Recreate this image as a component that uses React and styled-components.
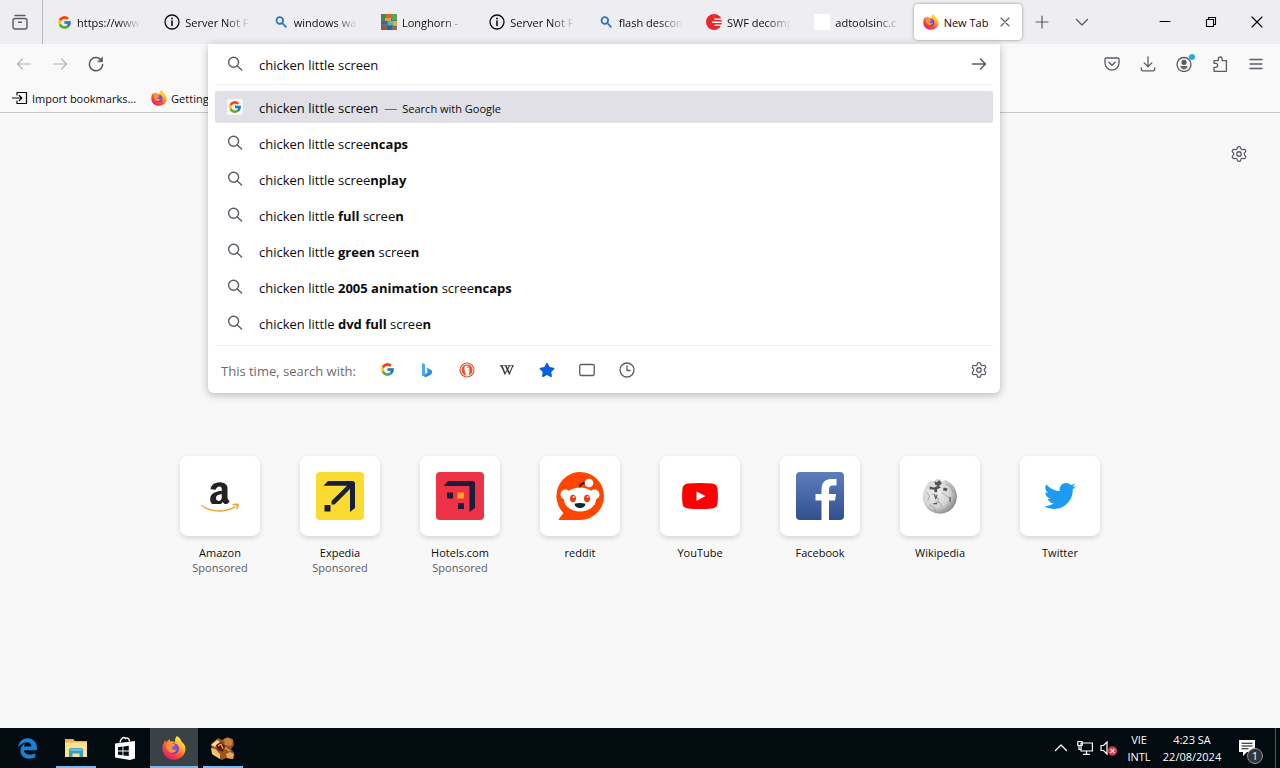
import React from "react";
import styled, { createGlobalStyle, css } from "styled-components";
import { FcGoogle } from "react-icons/fc";
import { FaAmazon, FaTwitter, FaStar, FaWikipediaW, FaEdgeLegacy } from "react-icons/fa";
import { Settings } from "lucide-react";

const GlobalStyle = createGlobalStyle`
  *, *::before, *::after { box-sizing: border-box; }
  body {
    margin: 0;
    background: #f8f8f8;
    color: #0c0c0d;
    font-family: "Open Sans", "Noto Sans", sans-serif;
    font-size: 11px;
  }
  button, input { font: inherit; color: inherit; }
  a { color: inherit; text-decoration: none; }
  svg { display: block; flex: none; }
`;

/* ---------- drawings ---------- */

const Line = styled.svg.attrs({ viewBox: "0 0 16 16", fill: "none" })`
  width: 16px;
  height: 16px;
  stroke: currentColor;
  stroke-width: ${(p) => p.$weight || 1.2};
  stroke-linecap: round;
  stroke-linejoin: round;
`;

const SearchIcon = ({ weight }) => (
  <Line $weight={weight || 1.4}>
    <circle cx="6.6" cy="6.2" r="5" />
    <path d="M10.3 9.900l4.300 4.100" />
  </Line>
);

const InfoIcon = () => (
  <Line $weight={1.3}>
    <circle cx="8" cy="8" r="7" />
    <path d="M8 7v4.500" strokeWidth="1.600" />
    <path d="M8 4.300v.3" strokeWidth="1.800" />
  </Line>
);

const BlueSearchIcon = () => (
  <svg width="16" height="16" viewBox="0 0 16 16" fill="none" stroke="#2a72c4" strokeWidth="1.800">
    <circle cx="6.800" cy="6.500" r="3.300" />
    <path d="M9.300 9l4 4.300" />
  </svg>
);

const MosaicIcon = () => (
  <svg width="16" height="16" viewBox="0 0 16 16">
    <rect width="16" height="16" fill="#4b7f78" />
    <path d="M0 0h5v5H0z" fill="#3f8d3e" />
    <path d="M5 0h6v4H5z" fill="#d8642f" />
    <path d="M11 0h5v6h-5z" fill="#58a552" />
    <path d="M4 4h6v3H4z" fill="#e0a23b" />
    <path d="M0 7h6v3H0z" fill="#2d6fa3" />
    <path d="M7 7h5v4H7z" fill="#62aeb5" />
    <path d="M12 7h4v5h-4z" fill="#e5ac38" />
    <path d="M0 11h5v5H0z" fill="#b8443a" />
    <path d="M6 12h5v4H6z" fill="#355c94" />
    <path d="M12 13h4v3h-4z" fill="#c9552f" />
  </svg>
);

const FlashIcon = () => (
  <svg width="16" height="16" viewBox="0 0 16 16">
    <circle cx="8" cy="8" r="8" fill="#e8292e" />
    <path d="M8 4.400h8v1.500H9zM6 7.600h10v1.400H6zM9 10.600h7v1.400H8z" fill="#f4f0f4" />
  </svg>
);

const FirefoxIcon = ({ size = 16, id }) => (
  <svg width={size} height={size} viewBox="0 0 24 24">
    <defs>
      <linearGradient id={`${id}-flame`} x1="20" y1="2" x2="5" y2="22" gradientUnits="userSpaceOnUse">
        <stop offset="0" stopColor="#fff04a" />
        <stop offset=".3" stopColor="#ffb52e" />
        <stop offset=".6" stopColor="#ff5a35" />
        <stop offset="1" stopColor="#e51a6c" />
      </linearGradient>
      <radialGradient id={`${id}-globe`} cx=".5" cy=".35" r=".7">
        <stop offset="0" stopColor="#9059ff" />
        <stop offset="1" stopColor="#5b3bb5" />
      </radialGradient>
    </defs>
    <path
      fill={`url(#${id}-flame)`}
      d="M14.800 0c3 1.600 4.400 4 4.700 5.700 2.800 1.800 4 4.400 4 7.100C23.500 19 18.400 23.700 12 23.700S.5 18.800.5 12.600c0-3.700 1.200-6.300 3-8.300.1 1.100.4 1.700.8 2.100C5.200 4.900 6.700 3.700 8.300 3.300 7.900 4.200 7.800 4.800 8 5.300c1.600-.2 3.700.1 5.100 1.200C12.700 4 13.100 1.700 14.800 0z"
    />
    <circle cx="11.600" cy="12.600" r="5.300" fill={`url(#${id}-globe)`} />
    <path
      fill="#ff9438"
      d="M4.300 7.600c2.200-1.300 4.400-1 6 .1l2.800.7c-.3 1.500-2.300 1.800-3.200 2.600-.5 2.400 2.200 3.800 5 2.200-1 3.700-5.500 4.700-8.400 2C4.600 13.300 4 10.500 4.300 7.600z"
    />
  </svg>
);

const RecentTabsIcon = () => (
  <Line $weight={1.4}>
    <path d="M3 1.500h10" />
    <rect x="1" y="4.500" width="14" height="10.500" rx="2" />
    <path d="M6.500 8.300h3" />
  </Line>
);

const BackIcon = () => (
  <Line>
    <path d="M14.500 8h-13M6.500 3l-5 5 5 5" />
  </Line>
);
const ForwardIcon = ({ weight }) => (
  <Line $weight={weight}>
    <path d="M1.500 8h13M9.500 3l5 5-5 5" />
  </Line>
);
const ReloadIcon = () => (
  <Line $weight={1.5}>
    <path d="M13.800 5A6.600 6.600 0 1 0 14.600 8.500" />
    <path d="M14.500 1.200v4.600H9.900z" fill="currentColor" strokeWidth=".6" />
  </Line>
);
const ImportIcon = () => (
  <Line>
    <path d="M5 5V2.500h9.500v11H5V11" />
    <path d="M.5 8h9M7.300 5.500L9.800 8l-2.500 2.500" />
  </Line>
);
const PocketIcon = () => (
  <Line $weight={1.3}>
    <path d="M2.200 2h11.600a1.200 1.200 0 0 1 1.200 1.200v3.900a7 7 0 0 1-14 0V3.200A1.200 1.200 0 0 1 2.200 2z" />
    <path d="M4.800 6.200L8 9.200l3.200-3" />
  </Line>
);
const DownloadIcon = () => (
  <Line $weight={1.3}>
    <path d="M8 .8v9.700M4.200 6.900L8 10.700l3.800-3.800" />
    <path d="M1.200 12v1a1.800 1.800 0 0 0 1.800 1.800h10a1.800 1.800 0 0 0 1.800-1.800v-1" />
  </Line>
);
const AccountIcon = () => (
  <Line $weight={1.3}>
    <circle cx="8" cy="8.500" r="7" />
    <circle cx="8" cy="6.300" r="2" fill="currentColor" />
    <path d="M4.800 10.300h6.400c0 1.700-1.400 2.800-3.200 2.800s-3.200-1.100-3.200-2.800z" fill="currentColor" strokeWidth=".5" />
  </Line>
);
const PuzzleIcon = () => (
  <Line $weight={1.3}>
    <path d="M2 7.300V4.600h4.300V2.900a1.900 1.900 0 0 1 3.800 0v1.700h4.300v10.700H2v-3.900h1.600a2 2 0 0 0 0-4.100z" />
  </Line>
);
const MenuIcon = () => (
  <Line $weight={1.3}>
    <path d="M2 3.500h12M2 8h12M2 12.500h12" />
  </Line>
);
const PlusIcon = () => (
  <Line>
    <path d="M8 2v12M2 8h12" />
  </Line>
);
const ChevronIcon = ({ up }) => (
  <Line $weight={1.3}>
    <path d={up ? "M2.500 10.500L8 5l5.500 5.500" : "M2.500 5.500L8 11l5.500-5.500"} />
  </Line>
);
const CrossIcon = ({ small }) => (
  <Line $weight={1.1}>
    <path d={small ? "M4 4l8 8M12 4l-8 8" : "M3 3l10 10M13 3L3 13"} />
  </Line>
);
const MinimizeIcon = () => (
  <Line $weight={1.1}>
    <path d="M3 7.500h10" />
  </Line>
);
const RestoreIcon = () => (
  <Line $weight={1.1}>
    <path d="M3.500 5.500h7v7h-7zM5.500 5.300V3.500h7v7h-2" />
  </Line>
);

const BingIcon = () => (
  <svg width="16" height="16" viewBox="0 0 16 16">
    <defs>
      <linearGradient id="bing-tail" x1="0" y1="0" x2="1" y2="1">
        <stop offset="0" stopColor="#3bd0f5" />
        <stop offset="1" stopColor="#2565dc" />
      </linearGradient>
    </defs>
    <path d="M3 1l3 1.200v10L3 14z" fill="#4aa8f5" />
    <path d="M7.300 5.500l4 1.800c2.300 1.100 2.300 4.200.3 5.400L6.800 15.300 3 13.500l5.800-2.900z" fill="url(#bing-tail)" />
  </svg>
);
const DuckIcon = () => (
  <svg width="16" height="16" viewBox="0 0 16 16">
    <circle cx="8" cy="8" r="7.600" fill="#de5833" />
    <circle cx="8" cy="8" r="6" fill="none" stroke="#fff" strokeWidth=".9" />
    <path d="M5.400 5.200c.8-2 3.700-1.900 4.600.1.500 1.200.3 2 .3 3 .3 2-.2 3.500-.6 5l-2.500.3C6.800 11 5 8 5.400 5.200z" fill="#fff" />
    <path d="M8.400 7.600l3 .3-2.700 1z" fill="#f8bf2e" />
    <circle cx="8.900" cy="5.600" r=".6" fill="#2c4f8f" />
  </svg>
);
const TabsIcon = () => (
  <Line $weight={1.3}>
    <rect x=".8" y="2.500" width="14.400" height="11" rx="1.300" />
  </Line>
);
const ClockIcon = () => (
  <Line $weight={1.3}>
    <circle cx="8" cy="8" r="7" />
    <path d="M8 3.800V8.500h3.200" />
  </Line>
);

const AmazonLogo = () => (
  <svg width="40" height="32" viewBox="0 0 40 32">
    <defs>
      <linearGradient id="amazon-letter" x1="0" y1="0" x2="0" y2="512" gradientUnits="userSpaceOnUse">
        <stop offset=".7" stopColor="#222" />
        <stop offset=".7" stopColor="#222" stopOpacity="0" />
      </linearGradient>
    </defs>
    <FaAmazon x="2" y="0" size={35} fill="url(#amazon-letter)" />
    <path d="M1 24.500c10 7 23 8 34 1.600l.8 1.200C24.500 34 9.500 33 .6 25.300z" fill="#f0a030" />
    <path d="M32 25c2.400-1.600 5.200-1.700 6.600-1 .5 1.800-.6 4.600-2.400 6.400l.5-4.800z" fill="#f0a030" />
  </svg>
);
const ExpediaLogo = () => (
  <svg width="48" height="48" viewBox="0 0 48 48">
    <rect width="48" height="48" rx="4" fill="#fbdb30" />
    <path d="M12 9h24.500q2.500 0 2.500 2.500V36l-5 4V17L18.500 32.500h-3V29L31 13.800H7.500z" fill="#191e3b" />
    <path d="M8.500 33h6v6.500h-6z" fill="#191e3b" />
  </svg>
);
const HotelsLogo = () => (
  <svg width="48" height="48" viewBox="0 0 48 48">
    <rect width="48" height="48" rx="4" fill="#ef3346" />
    <path d="M12 9h24.500q2.500 0 2.500 2.500V36l-5.500 4V14H7.500z" fill="#191e3b" />
    <path d="M11 20.500h6v6h-6zM22 31h6v6h-6z" fill="#191e3b" />
    <path d="M21.500 20.500H28v6h-6.500z" fill="#ffa51f" />
  </svg>
);
const RedditLogo = () => (
  <svg width="48" height="48" viewBox="0 0 48 48">
    <path d="M24 0a24 24 0 1 1 0 48H4q-2 0-.8-1.600L7.500 41A24 24 0 0 1 24 0z" fill="#ff4500" />
    <path d="M23.500 16c.5-3.500 2.500-5 6-5" fill="none" stroke="#4a1509" strokeWidth="1.800" />
    <circle cx="33" cy="11" r="4.300" fill="#fff" />
    <circle cx="9.500" cy="22.500" r="5" fill="#fff" />
    <circle cx="38.500" cy="22.500" r="5" fill="#fff" />
    <ellipse cx="24" cy="27.500" rx="16" ry="12" fill="#fff" />
    <ellipse cx="17" cy="26.500" rx="3" ry="3.800" fill="#e83e13" />
    <ellipse cx="31" cy="26.500" rx="3" ry="3.800" fill="#e83e13" />
    <circle cx="17.600" cy="25" r=".9" fill="#fff" />
    <circle cx="31.600" cy="25" r=".9" fill="#fff" />
    <path d="M18.500 31.700q5.500-1.500 11 0c-.5 5.800-10.500 5.800-11 0z" fill="#10283a" />
  </svg>
);
const YoutubeLogo = () => (
  <svg width="36" height="26" viewBox="0 0 36 26">
    <path d="M6 .6Q18-.5 30 .6q5 .4 5.500 5 .8 7.400 0 14.800-.5 4.600-5.500 5-12 1.100-24 0-5-.4-5.500-5-.8-7.400 0-14.800Q1 1 6 .6z" fill="#f00" />
    <path d="M14.500 8.500v9.500L23.500 13z" fill="#fff" />
  </svg>
);
const FacebookLogo = () => (
  <svg width="48" height="48" viewBox="0 0 48 48">
    <defs>
      <linearGradient id="facebook-blue" x1="0" y1="0" x2="0" y2="1">
        <stop offset="0" stopColor="#5e7dbd" />
        <stop offset="1" stopColor="#32508e" />
      </linearGradient>
    </defs>
    <rect width="48" height="48" rx="4" fill="url(#facebook-blue)" />
    <path d="M25.500 48V28.500H19.500v-6.500h6v-4.500C25.500 10.500 29.500 7 35 7h5.500v6.500H37c-3 0-4 1.500-4 4.200V22h7l-1 6.500h-6V48z" fill="#fff" />
  </svg>
);

const WikipediaLogo = () => (
  <svg width="38" height="36" viewBox="0 0 38 38">
    <defs>
      <radialGradient id="wiki-globe" cx=".38" cy=".4" r=".7">
        <stop offset="0" stopColor="#f4f4f4" />
        <stop offset=".6" stopColor="#d2d2d2" />
        <stop offset="1" stopColor="#777" />
      </radialGradient>
    </defs>
    <path d="M6 5.500l4-2.500 3 1 2-3 5 .5 1 2.500 4-2 5 3.500A18 18 0 1 1 3 11z" fill="url(#wiki-globe)" />
    <path d="M13 3.500l3 1 2-2.500 3 3.500-3 3-4-1zM8 9l5 1 4-2 3 2-4 2v3h-3v-2.500L8 12zM23 10l4 1-1 3-4-1z" fill="#555" />
    <path
      d="M10 17h4v4h3v4l-4 3M21 16c4 0 4 5 8 4M30 20v7l-4 3v5M5 15l3 4-2 5M14 25l5 1 2 5M25 6l5 3 3 7M8 28l5 3 2 5"
      fill="none"
      stroke="#a3a3a3"
      strokeWidth="1"
    />
    <path d="M13 17.500l1.500 4 1.500-4M29.500 20v5M12 27h4" fill="none" stroke="#555" strokeWidth="1.200" />
  </svg>
);

const ExplorerIcon = () => (
  <svg width="24" height="24" viewBox="0 0 24 24">
    <path d="M1 3h8l2 2h12v16H1z" fill="#e8b64c" />
    <path d="M1 6.500h22V21H1z" fill="#fbe38e" />
    <path d="M5 21v-7q0-2 2-2h10q2 0 2 2v7h-3.500v-3.500h-7V21z" fill="#3b9bc1" />
    <path d="M6 12.800h12l-1 2H7z" fill="#74c5df" />
  </svg>
);
const StoreIcon = () => (
  <svg width="24" height="24" viewBox="0 0 24 24">
    <path d="M7 6.500C7.500 2 11 .5 12.500 2.500c2-1.300 4 .5 4 3" fill="none" stroke="#fff" strokeWidth="1.400" />
    <path d="M2 7.500L22 5v17.500L17 24 2 21.500z" fill="#fff" />
    <path d="M5 11.200l4.500-.6v3.900H5zM10.400 10.500l5.400-.7v4.700h-5.400zM5 15.400h4.500v3.900L5 18.700zM10.400 15.400h5.400v4.700l-5.400-.7z" fill="#041014" />
  </svg>
);
const ArchiveIcon = () => (
  <svg width="26" height="24" viewBox="0 0 26 24">
    <path d="M1 8l7-6 4 2 5-3 6 2 1 6-3 4 3 4-1 6-7-1-4 2-9-5z" fill="#9b5524" />
    <path d="M1 9l6-5 3 2-5 5z" fill="#f7d98b" />
    <path d="M14 3l5-1 4 3-2 5-6-1z" fill="#c98148" />
    <path d="M1 12l4 1 5 5v5l-8-5z" fill="#f0c878" />
    <path d="M6 9l5-3 4 4-2 6-5-2z" fill="#5e1711" />
    <path d="M16 18l4-2 4 2-1 5-6-1z" fill="#e0aa57" />
    <path d="M8 10l3-2 2 5M3 14l6 5M15 12l5 3" stroke="#eeb25d" fill="none" strokeWidth="1.100" />
  </svg>
);
const MonitorIcon = () => (
  <Line $weight={1.2}>
    <path d="M4 3h11.400v8H4zM6.500 14.300h6M9.500 11v3" />
    <path d="M.8 1.500h4.400v4H.8zM2 5.500v4h2" />
  </Line>
);
const MutedIcon = () => (
  <svg width="18" height="16" viewBox="0 0 18 16">
    <path d="M1 5.500h2.500L7 2v12l-3.500-3.500H1z" fill="none" stroke="#fff" strokeWidth="1.200" />
    <circle cx="12.500" cy="11" r="4.700" fill="#da3b40" />
    <path d="M10.600 9.100l3.800 3.800M14.400 9.100l-3.800 3.800" stroke="#fff" strokeWidth="1.300" />
  </svg>
);
const MessageIcon = () => (
  <svg width="26" height="18" viewBox="0 0 26 18">
    <path d="M1 1h16v12H9l-4 4v-4H1z" fill="#fff" />
    <path d="M3.500 4.200h11M3.500 7h11M3.500 9.800h7" stroke="#041014" strokeWidth="1.100" />
  </svg>
);

/* ---------- window frame ---------- */

const Desktop = styled.div`
  display: flex;
  flex-direction: column;
  min-height: 100vh;
`;

const IconButton = styled.button`
  display: flex;
  align-items: center;
  justify-content: center;
  flex: none;
  width: ${(p) => p.$width || 36}px;
  height: ${(p) => p.$height || 32}px;
  padding: 0;
  border: 0;
  border-radius: 4px;
  background: none;
  color: ${(p) => (p.$faded ? "#b4b4b9" : "#5b5b66")};
  position: relative;
`;

const TitleBar = styled.header`
  display: flex;
  align-items: center;
  height: 44px;
  background: #eeeef2;
`;

const RecentTabs = styled.div`
  display: flex;
  align-items: center;
  align-self: stretch;
  padding: 0 4px 0 2px;
  margin-right: 4px;
  border-right: 1px solid #b6b6bc;
`;

const TabStrip = styled.div`
  display: flex;
  flex: 1;
  min-width: 0;
`;

const Tab = styled.div`
  display: flex;
  align-items: center;
  flex: 1 1 60px;
  min-width: 0;
  height: 36px;
  padding-right: ${(p) => (p.$active ? 8 : 10)}px;
  border-radius: 4px;
  ${(p) =>
    p.$active &&
    css`
      background: #fff;
      box-shadow: 0 0 3px rgba(0, 0, 0, 0.45);
    `}
`;

const TabButton = styled.button`
  display: flex;
  align-items: center;
  gap: 5px;
  flex: 1;
  min-width: 0;
  height: 100%;
  padding: 0 0 0 9px;
  border: 0;
  background: none;
`;

const TabIcon = styled.span`
  display: flex;
  align-items: center;
  justify-content: center;
  flex: none;
  width: 16px;
  height: 16px;
  background: ${(p) => (p.$blank ? "#fff" : "none")};
`;

const TabLabel = styled.span`
  flex: 1;
  overflow: hidden;
  padding-top: 2px;
  white-space: nowrap;
  text-align: left;
  line-height: 16px;
  ${(p) =>
    p.$fade &&
    css`
      mask-image: linear-gradient(to left, transparent 4px, #000 28px);
    `}
`;

const TabTools = styled.div`
  display: flex;
  margin-right: 40px;
`;

const WindowControls = styled.div`
  display: flex;
  button { color: #000; }
`;

/* ---------- toolbars ---------- */

const Toolbars = styled.div`
  position: relative;
  z-index: 1;
  border-bottom: 1px solid #c8c8cc;
  background: #f9f9fa;
`;

const NavBar = styled.nav`
  display: flex;
  height: 40px;
`;

const NavGroup = styled.div`
  display: flex;
  align-items: center;
  justify-content: ${(p) => (p.$end ? "flex-end" : "flex-start")};
  flex: none;
  width: ${(p) => (p.$end ? 280 : 208)}px;
  padding: 0 6px;
`;

const UrlSlot = styled.div`
  position: relative;
  flex: 1;
  min-width: 0;
`;

const AccountDot = styled.span`
  position: absolute;
  top: 6px;
  right: 7px;
  width: 6px;
  height: 6px;
  border-radius: 50%;
  background: #25a8f0;
`;

const BookmarkBar = styled.div`
  display: flex;
  align-items: center;
  gap: 15px;
  height: 28px;
  padding-left: 12px;
`;

const Bookmark = styled.a`
  display: flex;
  align-items: center;
  gap: 4px;
  white-space: nowrap;
`;

/* ---------- address drop-down ---------- */

const UrlPanel = styled.div`
  position: absolute;
  top: 0;
  left: 0;
  right: 0;
  padding: 0 7px;
  border-radius: 0 0 6px 6px;
  background: #fff;
  box-shadow: 0 2px 8px rgba(0, 0, 0, 0.26);
  font-size: 13px;
`;

const UrlField = styled.div`
  display: flex;
  align-items: center;
  gap: 16px;
  height: 41px;
  padding: 0 6px 0 12px;
  border-bottom: 1px solid #ececee;
  color: #5b5b66;
`;

const UrlInput = styled.input`
  flex: 1;
  min-width: 0;
  height: 32px;
  padding: 2px 0 0;
  border: 0;
  outline: 0;
  background: none;
  color: #0c0c0d;
`;

const Results = styled.ul`
  display: flex;
  flex-direction: column;
  gap: 4px;
  margin: 0;
  padding: 6px 0;
  list-style: none;
`;

const Result = styled.a`
  display: flex;
  align-items: center;
  gap: 16px;
  height: 32px;
  padding-left: 12px;
  border-radius: 2px;
  background: ${(p) => (p.$selected ? "#e0e0e6" : "none")};
`;

const ResultIcon = styled.span`
  display: flex;
  align-items: center;
  justify-content: center;
  width: 16px;
  height: 16px;
  border-radius: 2px;
  background: ${(p) => (p.$plate ? "#f7f7f9" : "none")};
  color: #5b5b66;
`;

const ResultText = styled.span`
  padding-top: 2px;
  white-space: pre;
  line-height: 20px;
  b { font-weight: 700; }
`;

const Action = styled.span`
  font-size: 11px;
  &::before {
    content: "—";
    margin: 0 5px 0 6px;
    color: #6b6b75;
    font-size: 13px;
  }
`;

const Engines = styled.div`
  display: flex;
  align-items: center;
  height: 48px;
  padding-left: 6px;
  border-top: 1px solid #ececee;
`;

const EnginesLabel = styled.span`
  width: 146px;
  padding-top: 2px;
  color: #6b6b75;
  white-space: nowrap;
`;

const EnginesEnd = styled.div`
  margin-left: auto;
  margin-right: -4px;
`;

/* ---------- new tab page ---------- */

const Page = styled.main`
  flex: 1;
  background: #f8f8f8;
`;

const PageTools = styled.div`
  display: flex;
  justify-content: flex-end;
  padding: 25px 23px;
`;

const TopSites = styled.ul`
  display: flex;
  justify-content: center;
  margin: 0;
  padding: 261px 0 24px;
  list-style: none;
`;

const Site = styled.a`
  display: flex;
  flex-direction: column;
  align-items: center;
  width: 120px;
  line-height: 15px;
`;

const Tile = styled.span`
  display: flex;
  align-items: center;
  justify-content: center;
  width: 80px;
  height: 80px;
  margin-bottom: 9px;
  border-radius: 8px;
  background: #fff;
  box-shadow: 0 2px 5px rgba(58, 57, 68, 0.18);
  color: #1d9bf0;
`;

const Sponsored = styled.span`
  color: #5b5b66;
`;

/* ---------- taskbar ---------- */

const Taskbar = styled.footer`
  display: flex;
  align-items: stretch;
  justify-content: space-between;
  height: 40px;
  padding-left: 3px;
  background: #020b0f;
  color: #fff;
`;

const Apps = styled.div`
  display: flex;
  gap: 1px;
`;

const AppButton = styled.button`
  display: flex;
  align-items: center;
  justify-content: center;
  position: relative;
  width: 48px;
  padding: 0;
  border: 0;
  background: ${(p) => (p.$active ? "#3b4245" : "none")};
  color: #1683d8;
  ${(p) =>
    p.$running &&
    css`
      &::after {
        content: "";
        position: absolute;
        bottom: 0;
        left: ${p.$active ? 0 : 4}px;
        right: ${p.$active ? 0 : 4}px;
        height: 2px;
        background: #76b9ed;
      }
    `}
`;

const Tray = styled.div`
  display: flex;
  align-items: stretch;
`;

const TrayButton = styled.button`
  display: flex;
  flex-direction: column;
  align-items: center;
  justify-content: center;
  position: relative;
  width: ${(p) => p.$width}px;
  padding: 0;
  border: 0;
  background: none;
  color: #fff;
  line-height: 17px;
  white-space: nowrap;
`;

const NoticeBadge = styled.span`
  position: absolute;
  right: 12px;
  bottom: 4px;
  width: 16px;
  height: 16px;
  border: 1px solid #8d9193;
  border-radius: 50%;
  background: #30373a;
  line-height: 14px;
`;

const ShowDesktop = styled.button`
  width: 5px;
  padding: 0;
  border: 0;
  border-left: 1px solid #50575a;
  background: none;
`;

/* ---------- content ---------- */

const tabs = [
  { label: "https://www", icon: <FcGoogle size={15} /> },
  { label: "Server Not F", icon: <InfoIcon /> },
  { label: "windows wa", icon: <BlueSearchIcon /> },
  { label: "Longhorn -", icon: <MosaicIcon /> },
  { label: "Server Not F", icon: <InfoIcon /> },
  { label: "flash descom", icon: <BlueSearchIcon /> },
  { label: "SWF decomp", icon: <FlashIcon /> },
  { label: "adtoolsinc.c", icon: null },
  { label: "New Tab", icon: <FirefoxIcon id="tab" />, active: true },
];

const suggestions = [
  <>chicken little scree<b>ncaps</b></>,
  <>chicken little scree<b>nplay</b></>,
  <>chicken little <b>full</b> scree<b>n</b></>,
  <>chicken little <b>green</b> scree<b>n</b></>,
  <>chicken little <b>2005 animation</b> scree<b>ncaps</b></>,
  <>chicken little <b>dvd full</b> scree<b>n</b></>,
];

const engines = [
  { name: "Google", icon: <FcGoogle size={15} /> },
  { name: "Bing", icon: <BingIcon /> },
  { name: "DuckDuckGo", icon: <DuckIcon /> },
  { name: "Wikipedia", icon: <FaWikipediaW size={14} color="#222" stroke="#222" strokeWidth={16} /> },
  { name: "Bookmarks", icon: <FaStar size={16} color="#0560df" /> },
  { name: "Tabs", icon: <TabsIcon /> },
  { name: "History", icon: <ClockIcon /> },
];

const sites = [
  { name: "Amazon", logo: <AmazonLogo />, sponsored: true },
  { name: "Expedia", logo: <ExpediaLogo />, sponsored: true },
  { name: "Hotels.com", logo: <HotelsLogo />, sponsored: true },
  { name: "reddit", logo: <RedditLogo /> },
  { name: "YouTube", logo: <YoutubeLogo /> },
  { name: "Facebook", logo: <FacebookLogo /> },
  { name: "Wikipedia", logo: <WikipediaLogo /> },
  { name: "Twitter", logo: <FaTwitter size={32} /> },
];

const apps = [
  { name: "Edge", icon: <FaEdgeLegacy size={21} /> },
  { name: "File Explorer", icon: <ExplorerIcon />, running: true },
  { name: "Store", icon: <StoreIcon /> },
  { name: "Firefox", icon: <FirefoxIcon size={24} id="task" />, running: true, active: true },
  { name: "Archive", icon: <ArchiveIcon />, running: true },
];

export default function App() {
  return (
    <Desktop>
      <GlobalStyle />
      <TitleBar>
        <RecentTabs>
          <IconButton aria-label="Recent browsing"><RecentTabsIcon /></IconButton>
        </RecentTabs>
        <TabStrip>
          {tabs.map((tab, i) => (
            <Tab key={i} $active={tab.active}>
              <TabButton>
                <TabIcon $blank={!tab.icon}>{tab.icon}</TabIcon>
                <TabLabel $fade={!tab.active}>{tab.label}</TabLabel>
              </TabButton>
              {tab.active && (
                <IconButton $width={18} $height={24} aria-label="Close tab"><CrossIcon small /></IconButton>
              )}
            </Tab>
          ))}
        </TabStrip>
        <TabTools>
          <IconButton $width={40} aria-label="New tab"><PlusIcon /></IconButton>
          <IconButton $width={40} aria-label="List all tabs"><ChevronIcon /></IconButton>
        </TabTools>
        <WindowControls>
          <IconButton $width={46} aria-label="Minimize"><MinimizeIcon /></IconButton>
          <IconButton $width={46} aria-label="Restore"><RestoreIcon /></IconButton>
          <IconButton $width={46} aria-label="Close"><CrossIcon /></IconButton>
        </WindowControls>
      </TitleBar>

      <Toolbars>
        <NavBar>
          <NavGroup>
            <IconButton $faded aria-label="Back"><BackIcon /></IconButton>
            <IconButton $faded aria-label="Forward"><ForwardIcon /></IconButton>
            <IconButton aria-label="Reload"><ReloadIcon /></IconButton>
          </NavGroup>
          <UrlSlot>
            <UrlPanel>
              <UrlField>
                <SearchIcon />
                <UrlInput aria-label="Search or enter address" defaultValue="chicken little screen" />
                <ForwardIcon weight={1.5} />
              </UrlField>
              <Results>
                <li>
                  <Result href="#google" $selected>
                    <ResultIcon $plate><FcGoogle size={14} /></ResultIcon>
                    <ResultText>chicken little screen<Action>Search with Google</Action></ResultText>
                  </Result>
                </li>
                {suggestions.map((text, i) => (
                  <li key={i}>
                    <Result href="#suggestion">
                      <ResultIcon><SearchIcon /></ResultIcon>
                      <ResultText>{text}</ResultText>
                    </Result>
                  </li>
                ))}
              </Results>
              <Engines>
                <EnginesLabel>This time, search with:</EnginesLabel>
                {engines.map((engine) => (
                  <IconButton key={engine.name} $width={40} aria-label={engine.name}>{engine.icon}</IconButton>
                ))}
                <EnginesEnd>
                  <IconButton aria-label="Search settings"><Settings size={18} strokeWidth={1.7} /></IconButton>
                </EnginesEnd>
              </Engines>
            </UrlPanel>
          </UrlSlot>
          <NavGroup $end>
            <IconButton aria-label="Save to Pocket"><PocketIcon /></IconButton>
            <IconButton aria-label="Downloads"><DownloadIcon /></IconButton>
            <IconButton aria-label="Account"><AccountIcon /><AccountDot /></IconButton>
            <IconButton aria-label="Extensions"><PuzzleIcon /></IconButton>
            <IconButton aria-label="Menu"><MenuIcon /></IconButton>
          </NavGroup>
        </NavBar>
        <BookmarkBar>
          <Bookmark href="#import"><ImportIcon />Import bookmarks...</Bookmark>
          <Bookmark href="#start"><FirefoxIcon id="bookmark" />Getting Started</Bookmark>
        </BookmarkBar>
      </Toolbars>

      <Page>
        <PageTools>
          <IconButton aria-label="Personalize new tab"><Settings size={18} strokeWidth={1.7} /></IconButton>
        </PageTools>
        <TopSites>
          {sites.map((site) => (
            <li key={site.name}>
              <Site href={`#${site.name}`}>
                <Tile>{site.logo}</Tile>
                <span>{site.name}</span>
                {site.sponsored && <Sponsored>Sponsored</Sponsored>}
              </Site>
            </li>
          ))}
        </TopSites>
      </Page>

      <Taskbar>
        <Apps>
          {apps.map((app) => (
            <AppButton key={app.name} aria-label={app.name} $running={app.running} $active={app.active}>
              {app.icon}
            </AppButton>
          ))}
        </Apps>
        <Tray>
          <TrayButton $width={24} aria-label="Show hidden icons"><ChevronIcon up /></TrayButton>
          <TrayButton $width={24} aria-label="Network"><MonitorIcon /></TrayButton>
          <TrayButton $width={24} aria-label="Volume"><MutedIcon /></TrayButton>
          <TrayButton $width={36}><span>VIE</span><span>INTL</span></TrayButton>
          <TrayButton $width={70}><span>4:23 SA</span><span>22/08/2024</span></TrayButton>
          <TrayButton $width={48} aria-label="Notifications"><MessageIcon /><NoticeBadge>1</NoticeBadge></TrayButton>
          <ShowDesktop aria-label="Show desktop" />
        </Tray>
      </Taskbar>
    </Desktop>
  );
}
